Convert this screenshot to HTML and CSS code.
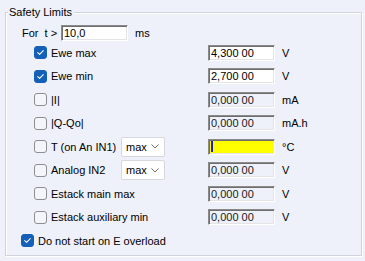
FILE: index.html
```html
<!DOCTYPE html>
<html>
<head>
<meta charset="utf-8">
<link rel="stylesheet" href="styles.css">
</head>
<body>
<div class="group">
  <span class="legend">Safety Limits</span>
  <div class="for-row">
    <span class="for-label">For&nbsp; t &gt;</span>
    <span class="edit for-edit">10,0</span>
    <span class="unit-ms">ms</span>
  </div>
  <div class="row">
    <span class="cb checked"><svg viewBox="0 0 13 13"><path d="M3.2 6.6 L5.4 8.8 L9.8 4.3"/></svg></span>
    <span class="label">Ewe max</span>
    <span></span>
    <span class="edit">4,300 00</span>
    <span class="unit">V</span>
  </div>
  <div class="row">
    <span class="cb checked"><svg viewBox="0 0 13 13"><path d="M3.2 6.6 L5.4 8.8 L9.8 4.3"/></svg></span>
    <span class="label">Ewe min</span>
    <span></span>
    <span class="edit">2,700 00</span>
    <span class="unit">V</span>
  </div>
  <div class="row">
    <span class="cb"></span>
    <span class="label">|I|</span>
    <span></span>
    <span class="edit disabled">0,000 00</span>
    <span class="unit">mA</span>
  </div>
  <div class="row">
    <span class="cb"></span>
    <span class="label">|Q-Qo|</span>
    <span></span>
    <span class="edit disabled">0,000 00</span>
    <span class="unit">mA.h</span>
  </div>
  <div class="row">
    <span class="cb"></span>
    <span class="label">T (on An IN1)</span>
    <span class="combo">max<svg viewBox="0 0 8 5"><path d="M0.5 0.5 L4 4 L7.5 0.5"/></svg></span>
    <span class="edit yellow"><span class="caret"></span></span>
    <span class="unit">°C</span>
  </div>
  <div class="row">
    <span class="cb"></span>
    <span class="label">Analog IN2</span>
    <span class="combo">max<svg viewBox="0 0 8 5"><path d="M0.5 0.5 L4 4 L7.5 0.5"/></svg></span>
    <span class="edit disabled">0,000 00</span>
    <span class="unit">V</span>
  </div>
  <div class="row">
    <span class="cb"></span>
    <span class="label">Estack main max</span>
    <span></span>
    <span class="edit disabled">0,000 00</span>
    <span class="unit">V</span>
  </div>
  <div class="row">
    <span class="cb"></span>
    <span class="label">Estack auxiliary min</span>
    <span></span>
    <span class="edit disabled">0,000 00</span>
    <span class="unit">V</span>
  </div>
  <div class="last-row">
    <span class="cb checked"><svg viewBox="0 0 13 13"><path d="M3.2 6.6 L5.4 8.8 L9.8 4.3"/></svg></span>
    <span class="label">Do not start on E overload</span>
  </div>
</div>
</body>
</html>
```

FILE: styles.css
```css
html, body {
  margin: 0;
  padding: 0;
  background: #eef0fa;
}
body {
  font-family: "Liberation Sans", Arial, sans-serif;
  font-size: 11px;
  color: #000;
  width: 365px;
  height: 261px;
  overflow: hidden;
}
.group {
  position: relative;
  box-sizing: border-box;
  margin: 12px 0 0 5px;
  width: 357px;
  height: 244px;
  border: 1px solid #cfd3da;
  box-shadow: inset 1px 1px 0 #fff, 1px 1px 0 #fff;
  padding: 12px 0 0 15px;
}
.legend {
  position: absolute;
  top: -7px;
  left: 2px;
  padding: 0 2px 0 1px;
  line-height: 13px;
  background: #eef0fa;
}
.for-row {
  display: flex;
  align-items: center;
  height: 16px;
  padding-left: 1px;
}
.for-label {
  width: 39px;
}
.for-edit {
  width: 67px;
  background: #fff;
}
.unit-ms {
  margin-left: 7px;
}
.row {
  display: grid;
  grid-template-columns: 13px 74px 87px 67px auto;
  align-items: center;
  height: 23.5px;
  padding-left: 13px;
}
.row .label {
  padding-left: 4px;
}
.last-row {
  display: flex;
  align-items: center;
  height: 23.5px;
}
.last-row .label {
  padding-left: 4px;
}
.cb {
  box-sizing: border-box;
  width: 13px;
  height: 13px;
  border: 1px solid #8c8e94;
  border-radius: 3px;
  background: #f4f5fb;
  display: block;
}
.cb.checked {
  border-color: #1460b8;
  background: #1460b8;
}
.cb svg {
  display: block;
  width: 11px;
  height: 11px;
  margin: 0;
}
.cb svg path {
  fill: none;
  stroke: #fff;
  stroke-width: 1.2;
  stroke-linecap: round;
  stroke-linejoin: round;
}
.label {
  white-space: nowrap;
}
.edit {
  box-sizing: border-box;
  display: block;
  height: 16px;
  width: 67px;
  line-height: 13px;
  padding: 1px 0 0 2px;
  background: #fff;
  border-top: 1px solid #8a8a8a;
  border-left: 1px solid #8a8a8a;
  border-right: 1px solid #ffffff;
  border-bottom: 1px solid #ffffff;
  box-shadow: inset 1px 1px 0 #6e6e6e, inset -1px -1px 0 #e4e4e4;
  white-space: nowrap;
  overflow: hidden;
}
.edit.disabled {
  background: #eef0fa;
  color: #1a1a1a;
}
.edit.yellow {
  background: #ffff00;
}
.caret {
  display: block;
  width: 2px;
  height: 11px;
  background: #1b1bd0;
}
.combo {
  box-sizing: border-box;
  display: flex;
  align-items: center;
  justify-content: space-between;
  width: 44px;
  height: 20px;
  padding: 0 5px 0 4px;
  background: #fff;
  border: 1px solid #d6d8de;
  border-radius: 2px;
}
.combo svg {
  width: 8px;
  height: 5px;
}
.combo svg path {
  fill: none;
  stroke: #707070;
  stroke-width: 1;
}
.unit {
  padding-left: 7px;
  white-space: nowrap;
}
```
